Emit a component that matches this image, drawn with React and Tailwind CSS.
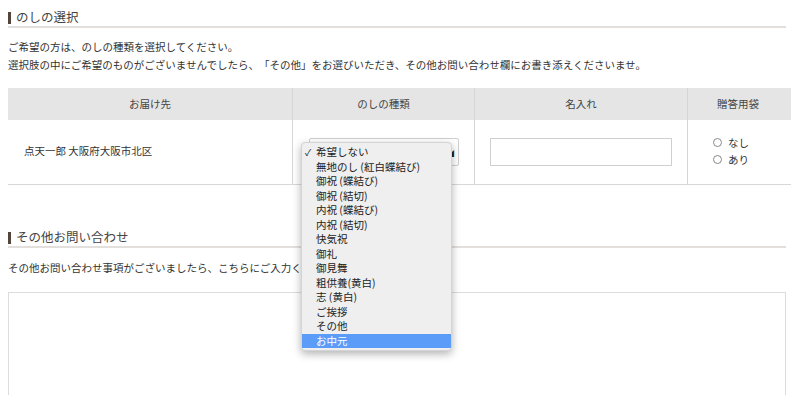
import React from "react";

const noshiOptions = [
  "希望しない",
  "無地のし (紅白蝶結び)",
  "御祝 (蝶結び)",
  "御祝 (結切)",
  "内祝 (蝶結び)",
  "内祝 (結切)",
  "快気祝",
  "御礼",
  "御見舞",
  "粗供養(黄白)",
  "志 (黄白)",
  "ご挨拶",
  "その他",
  "お中元",
];

const Heading = ({ title, className }) => (
  <h2 className={`pb-[1px] border-b-2 border-[#e3dfdc] ${className}`}>
    <div className="flex items-center h-[15px] gap-[5px]">
      <span className="block w-[3px] h-[12px] bg-[#54443c]" />
      <span className="text-[12.5px] leading-none text-[#444]">{title}</span>
    </div>
  </h2>
);

const Radio = ({ label }) => (
  <label className="flex items-center gap-[6px] h-[17px]">
    <span className="block w-[9px] h-[9px] rounded-full border border-[#888] bg-white" />
    <span>{label}</span>
  </label>
);

const App = () => {
  const selected = "希望しない";
  const hovered = "お中元";

  return (
    <div
      className="bg-white min-h-[395px] pl-2 pr-[5px] text-[#333] overflow-hidden [text-spacing-trim:space-all]"
      style={{ fontFamily: '"Noto Sans CJK JP", "Noto Sans", sans-serif' }}
    >
      <Heading title="のしの選択" className="pt-[10px]" />

      <p className="mt-[10px] text-[10.5px] leading-[18px]">
        ご希望の方は、のしの種類を選択してください。
        <br />
        選択肢の中にご希望のものがございませんでしたら、「その他」をお選びいただき、その他お問い合わせ欄にお書き添えくださいませ。
      </p>

      {/* noshi table */}
      <div className="mt-[14px] mr-[-5px] text-[10.5px]">
        <div className="grid grid-cols-[284px_182px_213px_1fr] h-[32px] bg-[#e5e5e5] text-[#444]">
          <div className="flex items-center justify-center">お届け先</div>
          <div className="flex items-center justify-center border-l border-[#d6d6d6]">のしの種類</div>
          <div className="flex items-center justify-center border-l border-[#d6d6d6]">名入れ</div>
          <div className="flex items-center justify-center pr-[3px] border-l border-[#d6d6d6]">贈答用袋</div>
        </div>
        <div className="grid grid-cols-[284px_182px_213px_1fr] h-[65px] border-b border-[#d8d8d8]">
          <div className="flex items-center pl-4 pb-[2px]">点天一郎 大阪府大阪市北区</div>
          <div className="flex items-center pl-4 border-l border-[#d6d6d6]">
            <div className="relative w-[150px] h-[28px] border border-[#cfcfcf] rounded-[2px] bg-white">
              <span className="absolute right-[4px] top-[11px] text-[7px] leading-none text-[#222]">◢</span>
              {/* open native-like dropdown */}
              <div className="absolute left-[-9px] top-[3px] z-10 w-[151px] py-[2px] bg-[#efefef] rounded-[4px] border border-[#d4d4d4] shadow-[0_3px_8px_rgba(0,0,0,0.3)]">
                {noshiOptions.map((item, index) => (
                  <div
                    key={index}
                    className={`relative h-[14.5px] pl-[14px] flex items-center leading-none ${
                      item === hovered ? "bg-[#5a9cf8] text-white" : "text-[#222]"
                    }`}
                  >
                    {item === selected && (
                      <span className="absolute left-[3px] text-[9px]">✓</span>
                    )}
                    {item}
                  </div>
                ))}
              </div>
            </div>
          </div>
          <div className="flex items-center justify-center border-l border-[#d6d6d6]">
            <div className="w-[182px] h-[28px] border border-[#cfcfcf] bg-white" />
          </div>
          <div className="flex flex-col justify-center pl-[25px] pb-[2px] border-l border-[#d6d6d6]">
            <Radio label="なし" />
            <Radio label="あり" />
          </div>
        </div>
      </div>

      <Heading title="その他お問い合わせ" className="mt-[45px]" />

      <p className="mt-[11px] text-[10.5px] leading-[18px]">
        その他お問い合わせ事項がございましたら、こちらにご入力ください。
      </p>

      <textarea className="block mt-[15px] w-full h-[120px] border border-[#dcdcdc] resize-none outline-none" />
    </div>
  );
};

export default App;
